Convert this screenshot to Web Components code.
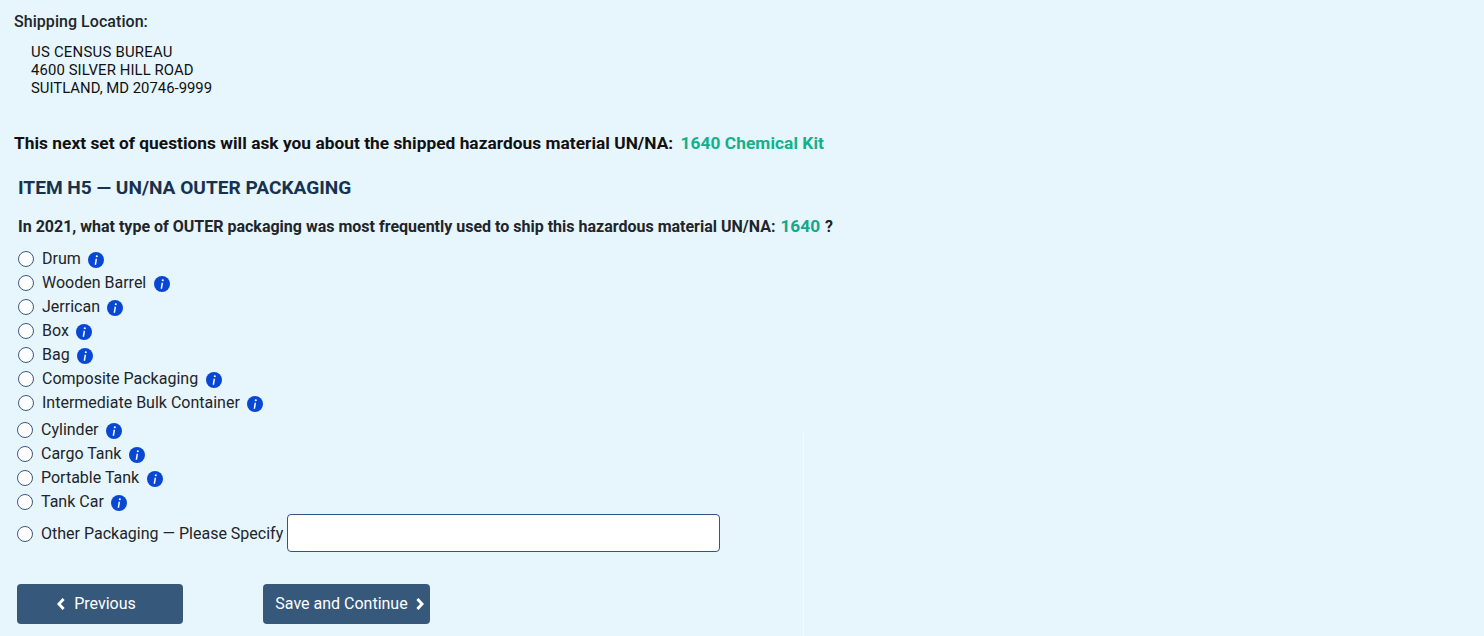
<!DOCTYPE html>
<html lang="en">
<head>
<meta charset="utf-8">
<title>Item H5</title>
<style>
  html, body { margin: 0; height: 636px; overflow: hidden; background: #e7f5fd; }
  body { font-family: Roboto, "Liberation Sans", sans-serif; font-size: 16px; color: #212529; }
</style>
</head>
<body>
<survey-page>
  <shipping-location slot="location" label="Shipping Location:">
    <span style="letter-spacing:.25px">US CENSUS BUREAU</span>
    <span style="letter-spacing:.1px">4600 SILVER HILL ROAD</span>
    <span>SUITLAND, MD 20746-9999</span>
  </shipping-location>
  <material-intro slot="intro" material="1640 Chemical Kit">This next set of questions will ask you about the shipped hazardous material UN/NA:</material-intro>
  <question-block slot="question" item="ITEM H5 — UN/NA OUTER PACKAGING" code="1640">
    <option-group>
      <radio-option info>Drum</radio-option>
      <radio-option info>Wooden Barrel</radio-option>
      <radio-option info>Jerrican</radio-option>
      <radio-option info>Box</radio-option>
      <radio-option info>Bag</radio-option>
      <radio-option info>Composite Packaging</radio-option>
      <radio-option info>Intermediate Bulk Container</radio-option>
    </option-group>
    <option-group second>
      <radio-option info>Cylinder</radio-option>
      <radio-option info>Cargo Tank</radio-option>
      <radio-option info>Portable Tank</radio-option>
      <radio-option info>Tank Car</radio-option>
      <other-option>Other Packaging — Please Specify</other-option>
    </option-group>
  </question-block>
  <nav-button slot="nav" dir="prev" style="width:166px">Previous</nav-button>
  <nav-button slot="nav" dir="next" style="width:167px">Save and Continue</nav-button>
</survey-page>

<script>
class SurveyPage extends HTMLElement {
  constructor() {
    super();
    this.attachShadow({ mode: 'open' });
    this.shadowRoot.innerHTML = `
      <style>
        :host { display: block; position: relative; height: 636px; padding: 13px 0 0 14px; box-sizing: border-box; }
        .nav { display: flex; gap: 80px; margin: 32px 0 0 3px; }
        /* faint white rule low on the page */
        .rule { position: absolute; left: 803px; top: 433px; bottom: 0; width: 1px; background: #f4fafe; }
      </style>
      <slot name="location"></slot>
      <slot name="intro"></slot>
      <slot name="question"></slot>
      <div class="nav"><slot name="nav"></slot></div>
      <div class="rule"></div>
    `;
  }
}

class ShippingLocation extends HTMLElement {
  constructor() {
    super();
    this.attachShadow({ mode: 'open' });
    this.shadowRoot.innerHTML = `
      <style>
        :host { display: block; }
        .label { font-weight: 500; font-size: 16px; letter-spacing: .05px; line-height: 18px; color: #212529; }
        .lines { display: flex; flex-direction: column; margin: 12px 0 0 17px; font-size: 14.88px; line-height: 18px; color: #111; }
      </style>
      <div class="label">${this.getAttribute('label')}</div>
      <div class="lines"><slot></slot></div>
    `;
  }
}

class MaterialIntro extends HTMLElement {
  constructor() {
    super();
    this.attachShadow({ mode: 'open' });
    this.shadowRoot.innerHTML = `
      <style>
        :host { display: block; margin-top: 34px; font-weight: 700; font-size: 17.3px; letter-spacing: .035px; line-height: 24px; color: #111; }
        .kit { color: #13b08c; margin-left: 3px; letter-spacing: .06px; }
      </style>
      <slot></slot> <span class="kit">${this.getAttribute('material')}</span>
    `;
  }
}

class QuestionBlock extends HTMLElement {
  constructor() {
    super();
    this.attachShadow({ mode: 'open' });
    this.shadowRoot.innerHTML = `
      <style>
        :host { display: block; margin: 0 0 0 4px; }
        h2 { margin: 20.5px 0 0; font-size: 19.1px; font-weight: 700; line-height: 24px; color: #16324f; }
        p { margin: 14.5px 0 0; font-size: 16px; font-weight: 700; line-height: 24px; color: #212529; }
        .code { color: #13a88a; font-size: 17.3px; margin: 0 1px; }
        .opts { margin-top: 8px; }
      </style>
      <h2>${this.getAttribute('item')}</h2>
      <p>In 2021, what type of OUTER packaging was most frequently used to ship this hazardous material UN/NA: <span class="code">${this.getAttribute('code')}</span> ?</p>
      <div class="opts"><slot></slot></div>
    `;
  }
}

class OptionGroup extends HTMLElement {
  constructor() {
    super();
    this.attachShadow({ mode: 'open' });
    this.shadowRoot.innerHTML = `
      <style>
        :host { display: flex; flex-direction: column; }
        :host([second]) { margin: 3px 0 0 -1px; }
      </style>
      <slot></slot>
    `;
  }
}

class RadioOption extends HTMLElement {
  constructor() {
    super();
    this.attachShadow({ mode: 'open' });
    const info = this.hasAttribute('info') ? '<info-icon></info-icon>' : '';
    this.shadowRoot.innerHTML = `
      <style>
        :host { display: flex; align-items: center; height: 24px; color: #212529; font-size: 16px; }
        .dot { width: 16px; height: 16px; box-sizing: border-box; border: 1px solid #3a5a7c; border-radius: 50%; background: #fff; margin-right: 8px; flex: none; }
        .label { margin-bottom: 2px; }
        info-icon { margin-left: 7.4px; }
      </style>
      <span class="dot"></span><span class="label"><slot></slot></span>${info}
    `;
  }
}

class OtherOption extends HTMLElement {
  constructor() {
    super();
    this.attachShadow({ mode: 'open' });
    this.shadowRoot.innerHTML = `
      <style>
        :host { display: flex; align-items: center; height: 38px; font-size: 16px; color: #212529; }
        .dot { width: 16px; height: 16px; box-sizing: border-box; border: 1px solid #3a5a7c; border-radius: 50%; background: #fff; margin: 2px 8px 0 0; flex: none; }
        .box { width: 433px; height: 38px; box-sizing: border-box; margin-left: 4px; border: 1px solid #35567a; border-radius: 4px; background: #fff; padding: 0; }
      </style>
      <span class="dot"></span><slot></slot><input class="box" type="text" aria-label="Other packaging">
    `;
  }
}

class InfoIcon extends HTMLElement {
  constructor() {
    super();
    this.attachShadow({ mode: 'open' });
    this.shadowRoot.innerHTML = `
      <style>
        :host { display: inline-flex; width: 16px; height: 16px; border-radius: 50%; background: #0747d4; flex: none; margin-top: 2px; }
        svg { width: 16px; height: 16px; display: block; }
      </style>
      <svg viewBox="0 0 16 16" aria-hidden="true">
        <circle cx="8.8" cy="4.3" r="1.05" fill="#fff"/>
        <path d="M7.6 6.8h1.5l-1 6H6.6z" fill="#fff"/>
      </svg>
    `;
  }
}

class NavButton extends HTMLElement {
  constructor() {
    super();
    this.attachShadow({ mode: 'open' });
    const prev = this.getAttribute('dir') === 'prev';
    const chevron = prev
      ? '<svg viewBox="0 0 8 12"><path d="M6.6 1L1.9 6l4.7 5" fill="none" stroke="#fff" stroke-width="2.9"/></svg>'
      : '<svg viewBox="0 0 8 12"><path d="M1.4 1l4.7 5-4.7 5" fill="none" stroke="#fff" stroke-width="2.9"/></svg>';
    this.shadowRoot.innerHTML = `
      <style>
        :host { display: inline-flex; align-items: center; justify-content: center; gap: 8px; height: 40px; box-sizing: border-box; background: #36587b; color: #fff; border-radius: 4px; font-size: 16px; font-weight: 400; }
        :host([dir="prev"]) { padding-right: 7px; gap: 9px; }
        :host([dir="next"]) { padding-left: 6px; }
        .text { margin-bottom: 2px; }
        svg { width: 8px; height: 12px; display: block; }
      </style>
      ${prev ? chevron : ''}<span class="text"><slot></slot></span>${prev ? '' : chevron}
    `;
  }
}

customElements.define('survey-page', SurveyPage);
customElements.define('shipping-location', ShippingLocation);
customElements.define('material-intro', MaterialIntro);
customElements.define('question-block', QuestionBlock);
customElements.define('option-group', OptionGroup);
customElements.define('radio-option', RadioOption);
customElements.define('other-option', OtherOption);
customElements.define('info-icon', InfoIcon);
customElements.define('nav-button', NavButton);
</script>
</body>
</html>
